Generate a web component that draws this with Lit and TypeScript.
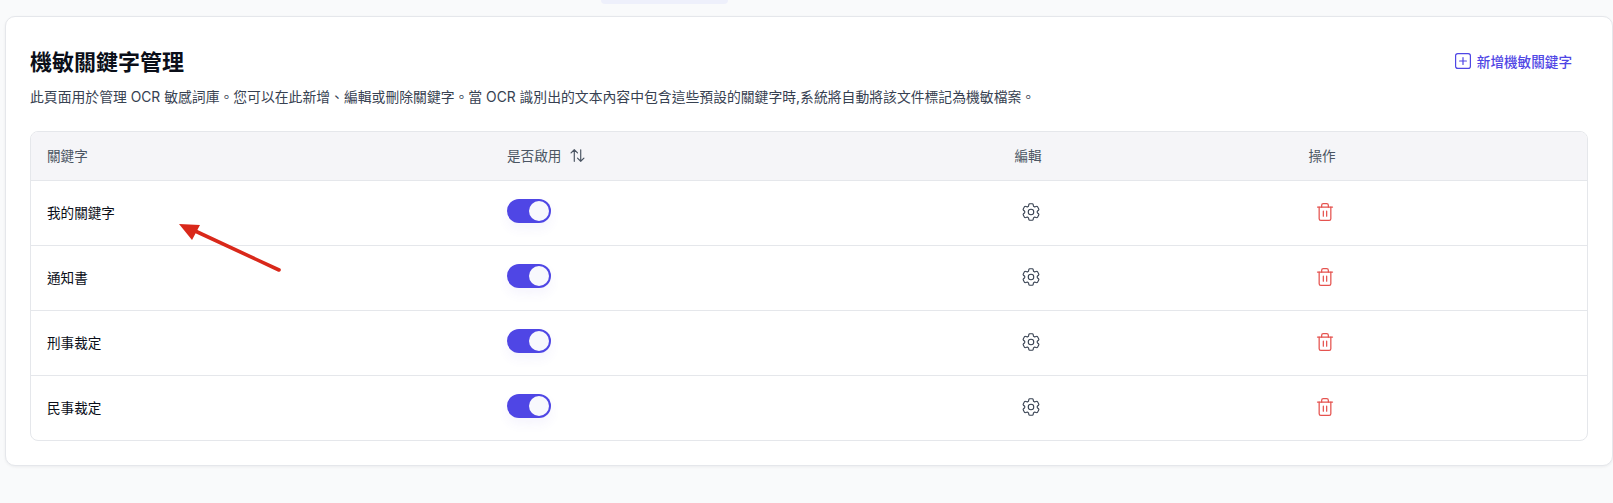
import { LitElement, css, html } from 'lit'
import { customElement, state } from 'lit/decorators.js'

interface Keyword {
  name: string
  enabled: boolean
}

@customElement('app-root')
export class AppRoot extends LitElement {
  static styles = css`
    :host {
      display: block;
      position: relative;
      height: 503px;
      overflow: hidden;
      background: #f9fafb;
      font-family: Inter, "Noto Sans CJK TC", sans-serif;
      font-size: 13.6px;
      color: #111827;
    }
    .top-tab {
      width: 127px;
      height: 4px;
      margin-left: 601px;
      background: #eef0fb;
      border-radius: 0 0 8px 8px;
    }
    .card {
      margin: 12px 0 0 5px;
      padding: 24px;
      height: 450px;
      box-sizing: border-box;
      background: #fff;
      border: 1px solid #e5e7eb;
      border-radius: 10px;
      box-shadow: 0 1px 3px rgba(17, 24, 39, 0.06);
    }
    .head {
      display: flex;
      align-items: flex-start;
      justify-content: space-between;
    }
    h1 {
      margin: 0;
      font-size: 22px;
      line-height: 42px;
      font-weight: 700;
      color: #0b0f19;
    }
    .desc {
      margin: 4px 0 0;
      font-size: 13.83px;
      line-height: 20px;
      color: #374151;
    }
    .add {
      display: flex;
      align-items: center;
      gap: 6px;
      margin: 10px 16px 0 0;
      padding: 0;
      border: none;
      background: none;
      font: inherit;
      font-weight: 500;
      color: #4f46e5;
      cursor: pointer;
    }
    .add svg { width: 16px; height: 16px; display: block; }
    .table {
      margin-top: 24px;
      border: 1px solid #e5e7eb;
      border-radius: 8px;
      overflow: hidden;
    }
    .row {
      display: grid;
      grid-template-columns: 460px 400px 280px 300px 1fr;
      align-items: center;
      height: 64px;
      border-top: 1px solid #e5e7eb;
    }
    .row.header {
      height: 48px;
      border-top: none;
      background: #f5f5f8;
      color: #4b5563;
    }
    .cell { padding: 0 16px 2px; }
    .center { display: flex; justify-content: center; }
    .edit-head { padding-right: 22px; }
    .op-head { padding-left: 18px; }
    .with-sort { display: flex; align-items: center; gap: 9px; }
    .with-sort svg { width: 15px; height: 13px; display: block; }
    .name { color: #0b0f19; }
    .toggle {
      display: block;
      position: relative;
      width: 44px;
      height: 24px;
      margin-bottom: 2px;
      padding: 0;
      border: none;
      border-radius: 12px;
      background: #d1d5db;
      box-shadow: 0 6px 12px rgba(79, 70, 229, 0.06);
      cursor: pointer;
    }
    .toggle.on { background: #4f46e5; }
    .knob {
      position: absolute;
      top: 2px;
      left: 2px;
      width: 20px;
      height: 20px;
      border-radius: 50%;
      background: #f8f8fd;
    }
    .toggle.on .knob { left: 22px; }
    .icon-btn {
      display: block;
      padding: 0;
      border: none;
      background: none;
      cursor: pointer;
    }
    .gear svg { width: 22px; height: 22px; display: block; }
    .trash svg { width: 20px; height: 20px; display: block; }
    .gear { color: #374151; margin-right: 1px; }
    .trash { color: #e5534f; margin-left: 7px; }
    .arrow {
      position: absolute;
      left: 169px;
      top: 214px;
      width: 125px;
      height: 70px;
      pointer-events: none;
    }
  `

  @state() private keywords: Keyword[] = [
    { name: '我的關鍵字', enabled: true },
    { name: '通知書', enabled: true },
    { name: '刑事裁定', enabled: true },
    { name: '民事裁定', enabled: true },
  ]

  private toggle(index: number) {
    this.keywords = this.keywords.map((k, i) => (i === index ? { ...k, enabled: !k.enabled } : k))
  }

  render() {
    return html`
      <div class="top-tab"></div>
      <section class="card">
        <div class="head">
          <div>
            <h1>機敏關鍵字管理</h1>
            <p class="desc">此頁面用於管理 OCR 敏感詞庫。您可以在此新增、編輯或刪除關鍵字。當 OCR 識別出的文本內容中包含這些預設的關鍵字時,系統將自動將該文件標記為機敏檔案。</p>
          </div>
          <button class="add">
            <svg viewBox="0 0 16 16" fill="none" stroke="currentColor" stroke-width="1.2" stroke-linecap="round">
              <rect x="0.6" y="0.6" width="14.8" height="14.8" rx="2.2"></rect>
              <path d="M8 4.6v6.8M4.6 8h6.8"></path>
            </svg>
            新增機敏關鍵字
          </button>
        </div>
        <div class="table">
          <div class="row header">
            <div class="cell">關鍵字</div>
            <div class="cell with-sort">
              是否啟用
              <svg viewBox="0 0 14 12" fill="none" stroke="currentColor" stroke-width="1.1" stroke-linecap="round" stroke-linejoin="round">
                <path d="M4 11.4V.6M1 3.6 4 .6l3 3"></path>
                <path d="M10 .6v10.8M7 8.4l3 3 3-3"></path>
              </svg>
            </div>
            <div class="cell center edit-head">編輯</div>
            <div class="cell center op-head">操作</div>
            <div></div>
          </div>
          ${this.keywords.map((k, i) => html`
            <div class="row">
              <div class="cell name">${k.name}</div>
              <div class="cell">
                <button class="toggle ${k.enabled ? 'on' : ''}" @click=${() => this.toggle(i)} aria-label="toggle">
                  <span class="knob"></span>
                </button>
              </div>
              <div class="cell center">
                <button class="icon-btn gear" aria-label="edit">
                  <svg viewBox="0 0 24 24" fill="none" stroke="currentColor" stroke-width="1.2" stroke-linecap="round" stroke-linejoin="round">
                    <path d="M9.594 3.94c.09-.542.56-.94 1.11-.94h2.593c.55 0 1.02.398 1.11.94l.213 1.281c.063.374.313.686.645.87.074.04.147.083.22.127.325.196.72.257 1.075.124l1.217-.456a1.125 1.125 0 0 1 1.37.49l1.296 2.247a1.125 1.125 0 0 1-.26 1.431l-1.003.827c-.293.241-.438.613-.43.992a7.723 7.723 0 0 1 0 .255c-.008.378.137.75.43.991l1.004.827c.424.35.534.955.26 1.43l-1.298 2.247a1.125 1.125 0 0 1-1.369.491l-1.217-.456c-.355-.133-.75-.072-1.076.124a6.47 6.47 0 0 1-.22.128c-.331.183-.581.495-.644.869l-.213 1.281c-.09.543-.56.94-1.11.94h-2.594c-.55 0-1.019-.398-1.11-.94l-.213-1.281c-.062-.374-.312-.686-.644-.87a6.52 6.52 0 0 1-.22-.127c-.325-.196-.72-.257-1.076-.124l-1.217.456a1.125 1.125 0 0 1-1.369-.49l-1.297-2.247a1.125 1.125 0 0 1 .26-1.431l1.004-.827c.292-.24.437-.613.43-.991a6.932 6.932 0 0 1 0-.255c.007-.38-.138-.751-.43-.992l-1.004-.827a1.125 1.125 0 0 1-.26-1.43l1.297-2.247a1.125 1.125 0 0 1 1.37-.491l1.216.456c.356.133.751.072 1.076-.124.072-.044.146-.086.22-.128.332-.183.582-.495.644-.869l.214-1.28Z"></path>
                    <path d="M15 12a3 3 0 1 1-6 0 3 3 0 0 1 6 0Z"></path>
                  </svg>
                </button>
              </div>
              <div class="cell center">
                <button class="icon-btn trash" aria-label="delete">
                  <svg viewBox="0 0 24 24" fill="none" stroke="currentColor" stroke-width="1.5" stroke-linecap="round" stroke-linejoin="round">
                    <path d="M3 6h18"></path>
                    <path d="M19 6v14a2 2 0 0 1-2 2H7a2 2 0 0 1-2-2V6"></path>
                    <path d="M8 6V4a2 2 0 0 1 2-2h4a2 2 0 0 1 2 2v2"></path>
                    <path d="M10 11v6M14 11v6"></path>
                  </svg>
                </button>
              </div>
              <div></div>
            </div>
          `)}
        </div>
      </section>
      <svg class="arrow" viewBox="0 0 125 70">
        <path d="M110 56 24 16" stroke="#d9281a" stroke-width="3.6" stroke-linecap="round"></path>
        <path d="M10 10 31 11 23 26Z" fill="#d9281a"></path>
      </svg>
    `
  }
}
